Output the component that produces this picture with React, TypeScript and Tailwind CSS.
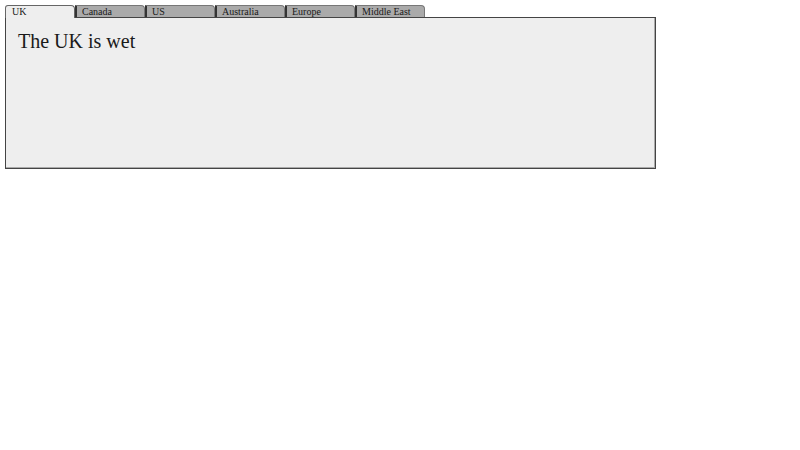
import React, { useState } from 'react';

const tabs = [
  { name: 'UK', text: 'The UK is wet' },
  { name: 'Canada', text: 'Canada is cold' },
  { name: 'US', text: 'The US is big' },
  { name: 'Australia', text: 'Australia is hot' },
  { name: 'Europe', text: 'Europe is old' },
  { name: 'Middle East', text: 'The Middle East is dry' },
];

export default function App() {
  const [active, setActive] = useState(0);

  return (
    <div className="pl-[5px] pt-[5px] font-['Liberation_Serif',serif] text-[#1a1a1a]">
      <div className="flex h-[13px] w-[651px]">
        {tabs.map((t, i) => (
          <button
            key={t.name}
            onClick={() => setActive(i)}
            className={
              i === active
                ? 'relative z-10 w-[70px] h-[13px] pl-[6px] text-left text-[10px] leading-[12px] bg-[#eeeeee] border border-b-0 border-[#666] rounded-t-[3px] rounded-tr-[4px]'
                : 'w-[70px] h-[12px] pl-[5px] text-left text-[10px] leading-[11px] bg-[#aaaaaa] border border-b-0 border-[#777] border-l-2 border-l-[#333] rounded-tr-[4px]'
            }
          >
            {t.name}
          </button>
        ))}
      </div>
      <div className="-mt-px w-[651px] h-[152px] bg-[#eeeeee] border border-[#444] shadow-[inset_-1px_-1px_0_#aaa] px-[12px] pt-[11px]">
        <p className="text-[20px] leading-[24px]">{tabs[active].text}</p>
      </div>
    </div>
  );
}
